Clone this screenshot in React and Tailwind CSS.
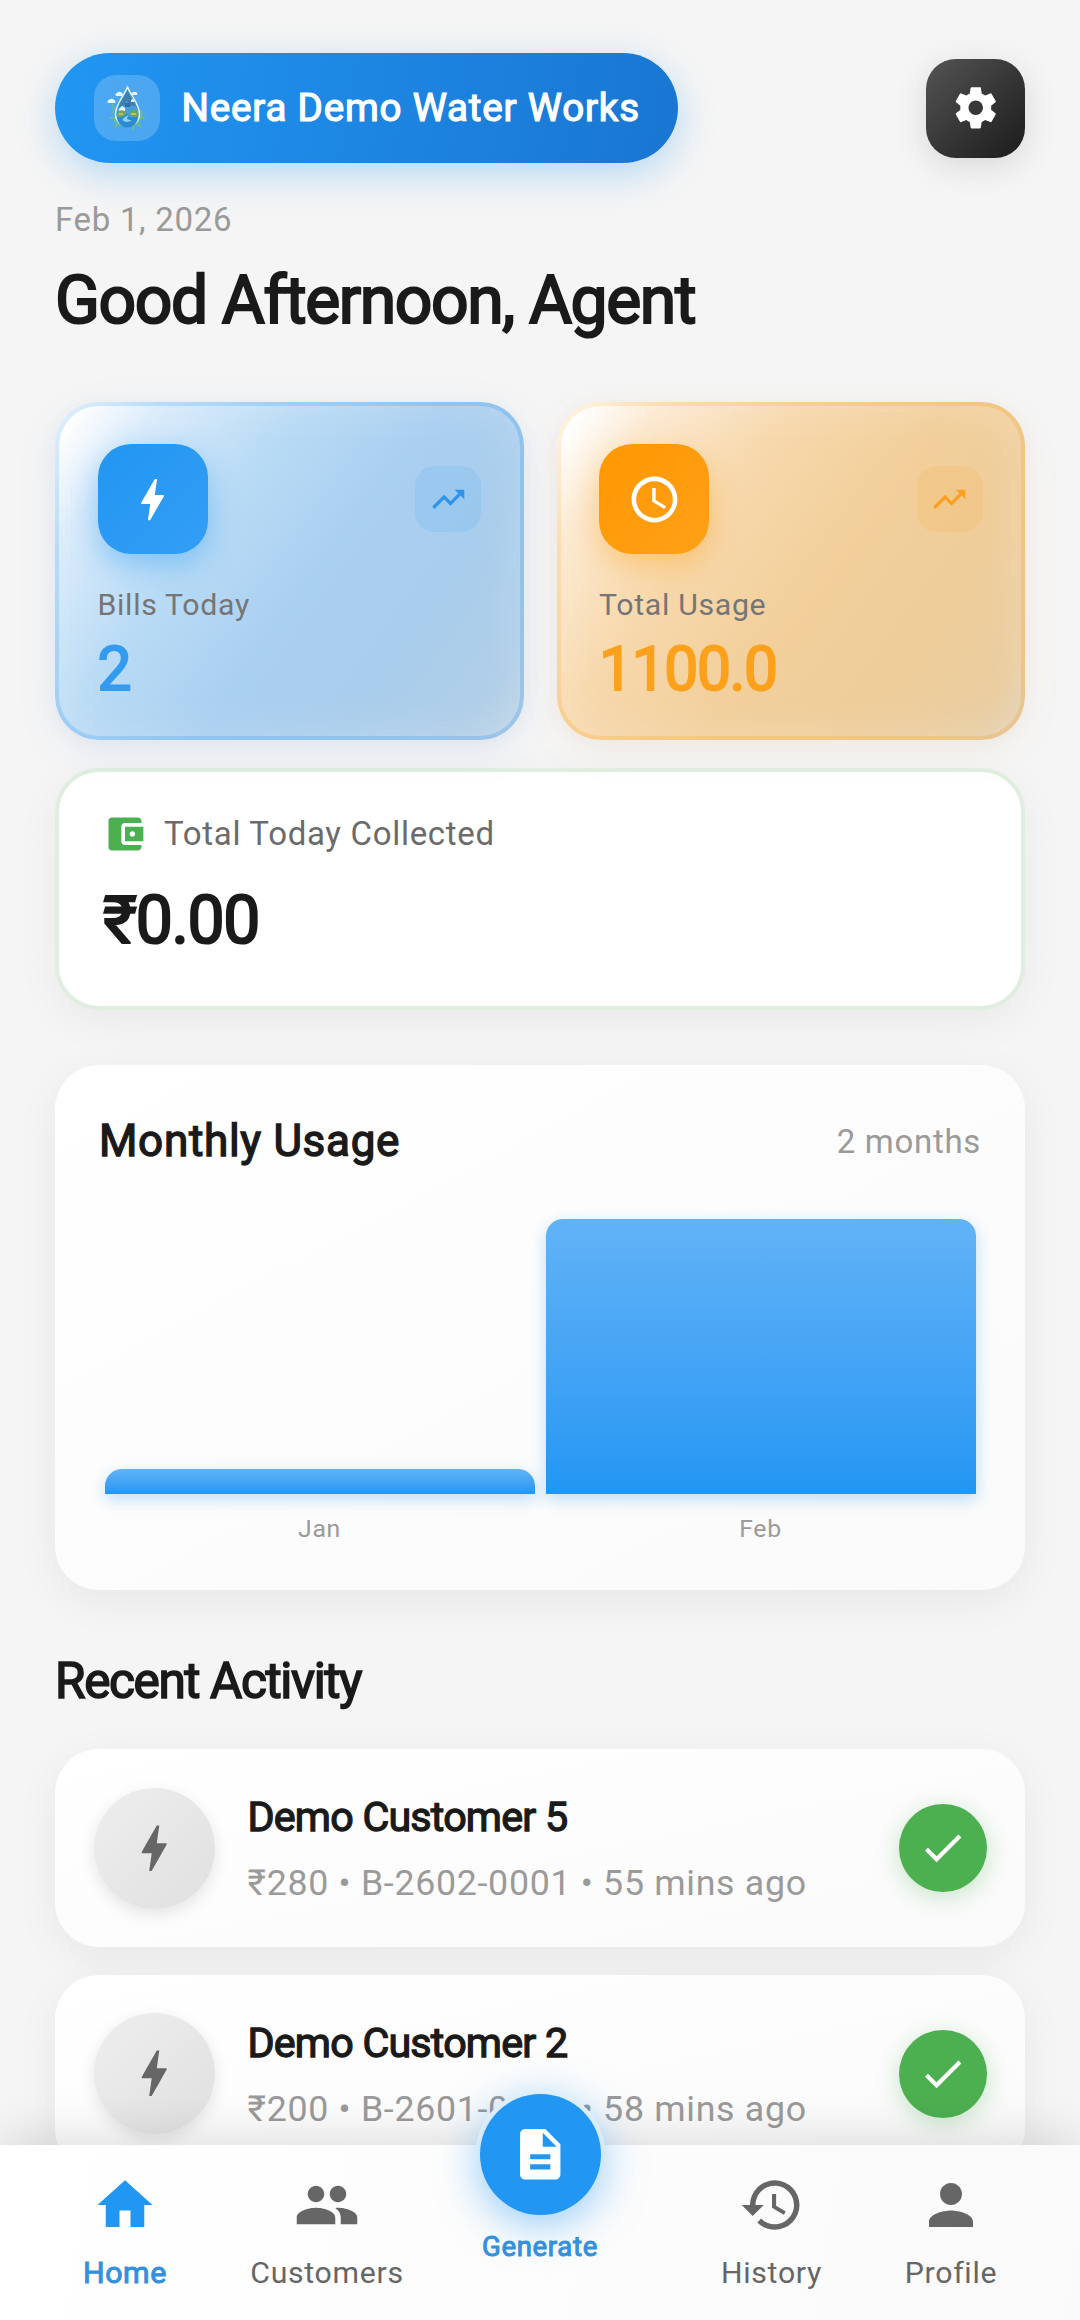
import {
  MdAccessTime,
  MdAccountBalanceWallet,
  MdBolt,
  MdCheck,
  MdDescription,
  MdHistory,
  MdPeople,
  MdPerson,
  MdTrendingUp,
} from "react-icons/md";

const stats = [
  {
    label: "Bills Today",
    value: "2",
    icon: MdBolt,
    card: "border-[#2196f3]/18 bg-[linear-gradient(126deg,#ffffff_4%,#d9ebfb_15%,#b9dbf5_34%,#a9cff1_55%,#a9cdec_74%,#b0cee8_91%,#bdd2e4_100%)] shadow-[0_11px_44px_rgba(33,110,243,0.08),0_4px_22px_rgba(0,0,0,0.04),inset_0_0_50px_rgba(250,250,250,0.22)]",
    iconBox:
      "bg-linear-to-br from-[#2196f3] to-[#339ef4] shadow-[0_11px_30px_rgba(33,150,243,0.4)]",
    badge: "bg-[#2196f3]/10 text-[#2c94ea]",
    text: "text-[#339bf0]",
  },
  {
    label: "Total Usage",
    value: "1100.0",
    icon: MdAccessTime,
    card: "border-[#ff9800]/15 bg-[linear-gradient(126deg,#ffffff_4%,#fce9cf_15%,#f7d8ab_34%,#f2cf9b_55%,#efcd9a_74%,#eacd9f_91%,#e0cdb2_100%)] shadow-[0_11px_44px_rgba(255,152,0,0.06),0_4px_22px_rgba(0,0,0,0.04),inset_0_0_50px_rgba(250,250,250,0.22)]",
    iconBox:
      "bg-linear-to-br from-[#ff9800] to-[#ffa016] shadow-[0_11px_30px_rgba(255,152,0,0.35)]",
    badge: "bg-[#ff9800]/10 text-[#fba01f]",
    text: "text-[#fca11c]",
  },
];

const months = [
  { name: "Jan", height: 25 },
  { name: "Feb", height: 275 },
];

const activity = [
  { id: 1, name: "Demo Customer 5", detail: "₹280 • B-2602-0001 • 55 mins ago" },
  { id: 2, name: "Demo Customer 2", detail: "₹200 • B-2601-0002 • 58 mins ago" },
];

function App() {
  return (
    <div className="relative h-[2320px] w-[1080px] overflow-hidden bg-[#f5f5f5] font-['Roboto',sans-serif] text-[#1a1a1a]">
      <main className="px-[55px] pt-[53px]">
        <header className="flex items-center justify-between">
          <div className="flex h-[110px] w-[623px] items-center rounded-full bg-[linear-gradient(100deg,#2196f3,#1976d2)] pl-[38.5px] shadow-[0_11px_38px_rgba(33,150,243,0.3)]">
            <div className="flex size-[66px] items-center justify-center rounded-[22px] bg-white/20">
              <LogoIcon />
            </div>
            <span className="ml-[22px] mt-[1px] whitespace-nowrap text-[38.5px] leading-none tracking-[0.83px] text-white [-webkit-text-stroke:1.2px]">
              Neera Demo Water Works
            </span>
          </div>

          <button
            type="button"
            className="flex size-[99px] items-center justify-center rounded-[30px] bg-linear-to-br from-[#555555] to-[#1c1c1c] text-white shadow-[0_8px_34px_rgba(0,0,0,0.12)]"
          >
            <GearIcon />
          </button>
        </header>

        <p className="mt-[37px] text-[33px] leading-[40px] tracking-[0.69px] text-[#9a9a9a]">
          Feb 1, 2026
        </p>
        <h1 className="mt-[15px] whitespace-nowrap text-[66px] leading-[92px] tracking-[-1.4px] [-webkit-text-stroke:2.1px]">
          Good Afternoon, Agent
        </h1>

        <section className="mt-[55px] grid grid-cols-2 gap-[33px]">
          {stats.map((stat) => (
            <StatCard key={stat.label} {...stat} />
          ))}
        </section>

        <section className="mt-[28px] h-[242px] rounded-[44px] border-4 border-[#dfeee0] bg-white px-[44px] pt-[40px] shadow-[0_11px_44px_rgba(0,0,0,0.05)]">
          <div className="flex items-center gap-[17px]">
            <MdAccountBalanceWallet size={44} className="text-[#4caf50]" />
            <span className="text-[33px] leading-[38px] tracking-[0.69px] text-[#6b6b6b]">
              Total Today Collected
            </span>
          </div>
          <p className="mt-[23px] text-[66px] leading-[84px] tracking-[-1.375px] [-webkit-text-stroke:2.1px]">
            ₹0.00
          </p>
        </section>

        <section className="mt-[55px] h-[525px] rounded-[44px] bg-linear-to-br from-white to-[#fafafa] p-[44px] shadow-[0_11px_44px_rgba(0,0,0,0.06)]">
          <div className="flex h-[64px] items-center justify-between">
            <h2 className="text-[44px] leading-none tracking-[0.69px] [-webkit-text-stroke:1.4px]">
              Monthly Usage
            </h2>
            <span className="text-[33px] leading-none tracking-[0.69px] text-[#9a9a9a]">
              2 months
            </span>
          </div>

          <div className="mt-[46px] flex h-[275px] items-end">
            {months.map((month) => (
              <div
                key={month.name}
                style={{ height: month.height }}
                className="mx-[5.5px] flex-1 rounded-t-[17px] bg-linear-to-t from-[#2196f3] to-[#61b3f7] shadow-[0_5px_16px_rgba(33,150,243,0.3)]"
              />
            ))}
          </div>
          <div className="mt-[19px] flex text-center text-[24.75px] leading-[32px] tracking-[0.69px] text-[#9a9a9a]">
            {months.map((month) => (
              <span key={month.name} className="flex-1">
                {month.name}
              </span>
            ))}
          </div>
        </section>

        <h2 className="mt-[61px] text-[49.5px] leading-[60px] tracking-[-1.375px] [-webkit-text-stroke:1.6px]">
          Recent Activity
        </h2>

        <div className="mt-[38px] space-y-[27.5px]">
          {activity.map((item) => (
            <ActivityRow key={item.id} name={item.name} detail={item.detail} />
          ))}
        </div>
      </main>

      <nav className="absolute inset-x-0 bottom-0 flex h-[175px] bg-[linear-gradient(100deg,#ffffff,#fafafa)] pt-[27px] shadow-[0_-8px_44px_rgba(0,0,0,0.12)]">
        <NavItem icon={HomeIcon} label="Home" width="w-[250px]" active />
        <NavItem icon={MdPeople} label="Customers" width="w-[154px]" />
        <div className="-mt-[78px] flex w-[272px] flex-col items-center">
          <div className="flex size-[121px] items-center justify-center rounded-full bg-[#2196f3] text-white shadow-[0_8px_44px_rgba(33,150,243,0.5),0_0_0_4.5px_#fdfdfd]">
            <MdDescription size={60.5} />
          </div>
          <span className="mt-[15px] text-[27.5px] leading-[34px] tracking-[0.69px] text-[#3490dc] [-webkit-text-stroke:1px]">
            Generate
          </span>
        </div>
        <NavItem icon={MdHistory} label="History" width="w-[191px]" />
        <NavItem icon={MdPerson} label="Profile" width="w-[168px]" />
      </nav>
    </div>
  );
}

function StatCard({ label, value, icon: Icon, card, iconBox, badge, text }) {
  return (
    <article
      className={`h-[338px] rounded-[44px] border-4 bg-origin-border px-[38.5px] pt-[38px] ${card}`}
    >
      <div className="flex items-center justify-between">
        <div
          className={`flex size-[110px] items-center justify-center rounded-[33px] text-white ${iconBox}`}
        >
          <Icon size={55} />
        </div>
        <div
          className={`flex size-[66px] items-center justify-center rounded-[20px] ${badge}`}
        >
          <MdTrendingUp size={38.5} />
        </div>
      </div>
      <p className="mt-[33px] text-[30.25px] leading-[36px] tracking-[0.69px] text-[#757575]">
        {label}
      </p>
      <p
        className={`mt-[11px] text-[60.5px] leading-[72px] tracking-[-1.375px] [-webkit-text-stroke:2px] ${text}`}
      >
        {value}
      </p>
    </article>
  );
}

function ActivityRow({ name, detail }) {
  return (
    <article className="flex h-[198px] items-center rounded-[44px] bg-linear-to-br from-white to-[#fafafa] px-[38.5px] shadow-[0_11px_44px_rgba(0,0,0,0.06)]">
      <div className="flex size-[121px] items-center justify-center rounded-full bg-linear-to-br from-[#eeeeee] to-[#e0e0e0] text-[#666666] shadow-[0_5px_16px_rgba(0,0,0,0.1)]">
        <MdBolt size={60.5} />
      </div>
      <div className="ml-[33px] flex-1 whitespace-nowrap">
        <p className="text-[41.25px] leading-[52px] tracking-[-0.8px] [-webkit-text-stroke:1.3px]">
          {name}
        </p>
        <p className="mt-[18px] text-[35.75px] leading-[44px] tracking-[0.69px] text-[#9a9a9a]">
          {detail}
        </p>
      </div>
      <div className="flex size-[88px] items-center justify-center rounded-full bg-[#4caf50] text-white shadow-[0_5px_24px_rgba(76,175,80,0.3)]">
        <MdCheck size={49.5} />
      </div>
    </article>
  );
}

function NavItem({ icon: Icon, label, width, active }) {
  return (
    <div
      className={`flex flex-col items-center ${width} ${active ? "text-[#2196f3]" : "text-[#666666]"}`}
    >
      <Icon size={66} />
      <span
        className={`mt-[16px] text-[30.25px] leading-[38px] tracking-[0.69px] ${active ? "text-[#3490dc] [-webkit-text-stroke:1px]" : ""}`}
      >
        {label}
      </span>
    </div>
  );
}

function HomeIcon({ size }) {
  return (
    <svg width={size} height={size} viewBox="0 0 24 24" fill="currentColor">
      <path d="M10 20v-6h4v6h5v-8h3L12 3 2 12h3v8z" />
    </svg>
  );
}

function GearIcon() {
  return (
    <svg
      viewBox="0 0 24 24"
      fill="currentColor"
      className="size-[49.5px]"
    >
      <path d="M19.43 12.98c.04-.32.07-.64.07-.98s-.03-.66-.07-.98l2.11-1.65c.19-.15.24-.42.12-.64l-2-3.46c-.12-.22-.39-.3-.61-.22l-2.49 1c-.52-.4-1.08-.73-1.69-.98l-.38-2.65A.488.488 0 0 0 14 2h-4c-.25 0-.46.18-.49.42l-.38 2.65c-.61.25-1.17.59-1.69.98l-2.49-1c-.23-.09-.49 0-.61.22l-2 3.46c-.13.22-.07.49.12.64l2.11 1.65c-.04.32-.07.65-.07.98s.03.66.07.98l-2.11 1.65c-.19.15-.24.42-.12.64l2 3.46c.12.22.39.3.61.22l2.49-1c.52.4 1.08.73 1.69.98l.38 2.65c.03.24.24.42.49.42h4c.25 0 .46-.18.49-.42l.38-2.65c.61-.25 1.17-.59 1.69-.98l2.49 1c.23.09.49 0 .61-.22l2-3.46c.12-.22.07-.49-.12-.64l-2.11-1.65zM12 15.5c-1.93 0-3.5-1.57-3.5-3.5s1.57-3.5 3.5-3.5 3.5 1.57 3.5 3.5-1.57 3.5-3.5 3.5z" />
    </svg>
  );
}

function LogoIcon() {
  return (
    <svg viewBox="0 0 44 44" className="size-[44px]">
      {/* leaves around the drop */}
      <g fill="none" stroke="#6dbb8a" strokeWidth="2" strokeLinecap="round">
        <path d="M8 19c1 3 1 5 0 8M5 32h4M9 31c0 4 3 7 7 8M12 39l-2 2" />
        <path d="M36 25c1 2 1 4 0 7M39 32h-4M35 33c-2 4-4 6-8 7M28 40v3M32 37l3 3" />
      </g>
      {/* clouds */}
      <g fill="#eaf6ff">
        <path d="M3 17a2 2 0 0 1 1-3 3 3 0 0 1 5 0 2 2 0 0 1 1 3z" />
        <path d="M11 10a2 2 0 0 1 1-3 3 3 0 0 1 5 0 2 2 0 0 1 0 3z" />
        <path d="M26 9a2 2 0 0 1 1-2 3 3 0 0 1 5 0 2 2 0 0 1 0 2z" />
      </g>
      <path
        d="M22.5 1c3 8 12 17 12 27a12 12 0 0 1-24 0c0-10 9-19 12-27z"
        fill="#4a9fd6"
        stroke="#f2faff"
        strokeWidth="1.4"
      />
      <path d="M22.5 4c2 6 6 11 9 17l-4-2-3 2-2-6-3 4-3 1-3 2c2-7 7-12 9-18z" fill="#3f7fae" />
      <path d="M20 17h5v4h-5z" fill="#2c6fb0" />
      <path d="M14 23l3-3 3 2v3h-6z" fill="#eaf6ff" />
      <path d="M26 14l2-1 2 3h-4z" fill="#eaf6ff" />
      <path d="M11.5 27c3-4 8-3 10 0l-3 4H12zM33.5 27c-3-4-7-3-10 0l4 4H33z" fill="#6aa85e" />
      <path d="M14 27h4v2h-4zM26 27h5v2h-5z" fill="#c9b978" />
      <path d="M12 31h6l4-4 2 4h9a10.5 10.5 0 0 1-21 0z" fill="#2a8ad4" />
      <path d="M20 31l3-2-1 4 5 2-6 1-4-2z" fill="#8fd4f7" />
    </svg>
  );
}

export default App;
